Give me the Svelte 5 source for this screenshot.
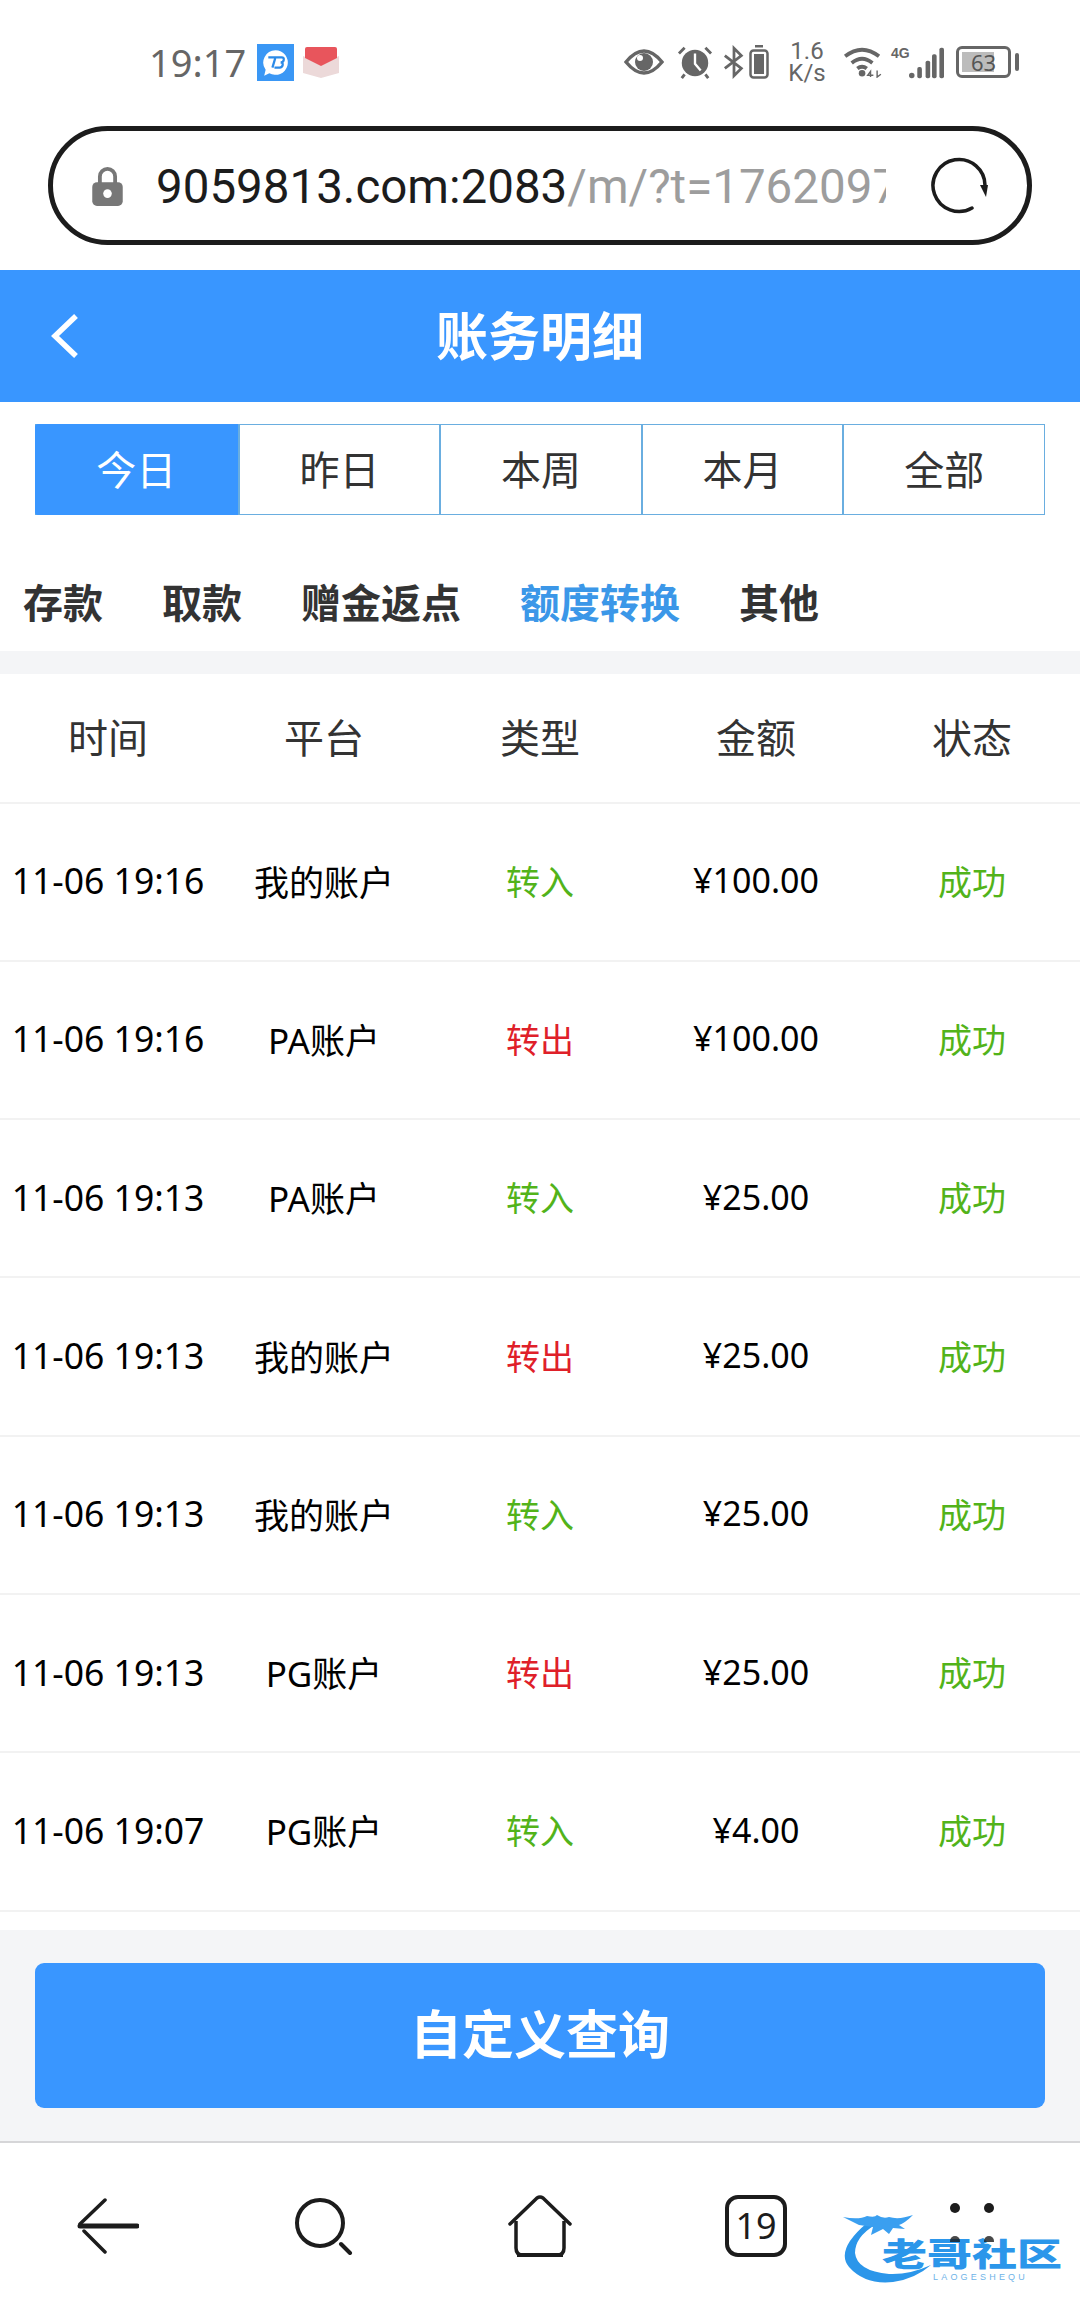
<script>
  const periods = ["今日", "昨日", "本周", "本月", "全部"];
  const kinds = [
    { label: "存款" },
    { label: "取款" },
    { label: "赠金返点" },
    { label: "额度转换", active: true },
    { label: "其他" }
  ];
  const columns = ["时间", "平台", "类型", "金额", "状态"];
  const rows = [
    { time: "11-06 19:16", platform: "我的账户", type: "转入", amount: "¥100.00" },
    { time: "11-06 19:16", platform: "PA账户", type: "转出", amount: "¥100.00" },
    { time: "11-06 19:13", platform: "PA账户", type: "转入", amount: "¥25.00" },
    { time: "11-06 19:13", platform: "我的账户", type: "转出", amount: "¥25.00" },
    { time: "11-06 19:13", platform: "我的账户", type: "转入", amount: "¥25.00" },
    { time: "11-06 19:13", platform: "PG账户", type: "转出", amount: "¥25.00" },
    { time: "11-06 19:07", platform: "PG账户", type: "转入", amount: "¥4.00" }
  ];
</script>

<div class="page">
  <div class="status">
    <div class="status-left">
      <span class="clock">19:17</span>
      <span class="app-badge">
        <svg width="37" height="37" viewBox="0 0 36 36">
          <rect width="36" height="36" fill="#3a97f5" />
          <path d="M18 6a12 12 0 1 1-6 22.400L7 31l1.400-6A12 12 0 0 1 18 6z" fill="#fff" />
          <path d="M11 13h7l-3 10M19 13h5q2.500 0 2 2.500t-3 2.500q2.500 0 2 2.500t-3 2.500h-5" fill="none" stroke="#2b8ae8" stroke-width="2.200" />
        </svg>
      </span>
      <svg class="box" width="36" height="31" viewBox="0 0 36 31">
        <path d="M0 9l18 8 18-8v17l-18 5-18-5z" fill="#ecd9d9" />
        <path d="M2 2q0-2 2-2h28q2 0 2 2v9l-16 8-16-8z" fill="#e8555c" />
      </svg>
    </div>
    <div class="status-right">
      <svg width="40" height="28" viewBox="0 0 40 28">
        <path d="M2 14Q11 3 20 3t18 11Q29 25 20 25T2 14z" fill="none" stroke="#666" stroke-width="3.500" />
        <circle cx="20" cy="14" r="9" fill="#666" />
        <circle cx="16" cy="10" r="3" fill="#fff" />
      </svg>
      <svg class="alarm" width="36" height="34" viewBox="0 0 38 36">
        <circle cx="19" cy="19" r="14" fill="#666" />
        <path d="M19 9v11l6 7" fill="none" stroke="#fff" stroke-width="2.500" />
        <path d="M2 9l6-6M36 9l-6-6M8 31l-3 4M30 31l3 4" stroke="#666" stroke-width="3" />
      </svg>
      <svg class="bt" width="22" height="34" viewBox="0 0 24 34">
        <path d="M2 10l18 14-8 8V2l8 8L2 24" fill="none" stroke="#666" stroke-width="3" />
      </svg>
      <svg class="mini-batt" width="20" height="34" viewBox="0 0 20 34">
        <rect x="6" y="0" width="8" height="2.500" fill="#666" />
        <rect x="1.500" y="5.500" width="17" height="27" rx="3" fill="none" stroke="#666" stroke-width="2.500" />
        <rect x="5" y="9" width="10" height="20" fill="#666" />
      </svg>
      <div class="speed"><span>1.6</span><span>K/s</span></div>
      <svg class="wifi" width="40" height="32" viewBox="0 0 42 34">
        <path d="M2 11Q20-3 38 11M9 18q11-9 22 0M15 24q5-4 10 0" fill="none" stroke="#666" stroke-width="4" />
        <circle cx="20" cy="29" r="3.500" fill="#666" />
        <path d="M29 33v-6l-3 4h6M36 26v7l4-3" fill="none" stroke="#666" stroke-width="1.500" />
      </svg>
      <span class="net">4G</span>
      <svg class="signal" width="35" height="33" viewBox="0 0 38 34">
        <circle cx="3" cy="31" r="3" fill="#666" />
        <rect x="9" y="22" width="5" height="12" rx="2" fill="#666" />
        <rect x="18" y="15" width="5" height="19" rx="2" fill="#666" />
        <rect x="25" y="8" width="5" height="26" rx="2" fill="#666" />
        <rect x="33" y="1" width="5" height="33" rx="2" fill="#666" />
      </svg>
      <div class="battery">
        <div class="cell"><span class="level"></span><span class="pct">63</span></div>
        <span class="nub"></span>
      </div>
    </div>
  </div>

  <div class="url-wrap">
    <div class="url">
      <svg class="lock" width="31" height="40" viewBox="0 0 32 42">
        <path d="M8 20v-9a8 8 0 0 1 16 0v9" fill="none" stroke="#777" stroke-width="4" />
        <rect x="0" y="17" width="32" height="25" rx="5" fill="#777" />
        <circle cx="16" cy="29" r="4.500" fill="#fff" />
      </svg>
      <div class="url-text"><b>9059813.com:2083</b><span>/m/?t=176209756</span></div>
      <svg class="reload" width="60" height="60" viewBox="0 0 60 60">
        <path d="M43 52A26 26 0 1 1 56 30v3" fill="none" stroke="#1c1c1c" stroke-width="3.500" stroke-linecap="round" />
        <path d="M51 29h8l-2 12z" fill="#1c1c1c" />
      </svg>
    </div>
  </div>

  <header class="topbar">
    <svg class="chevron" width="30" height="46" viewBox="0 0 30 46">
      <path d="M26 3L5 23l21 20" fill="none" stroke="#fff" stroke-width="5.500" />
    </svg>
    <h1>账务明细</h1>
  </header>

  <div class="periods">
    {#each periods as p, i}
      <div class="period" class:on={i === 0}>{p}</div>
    {/each}
  </div>

  <nav class="kinds">
    {#each kinds as k}
      <span class:active={k.active}>{k.label}</span>
    {/each}
  </nav>

  <div class="strip"></div>

  <div class="thead">
    {#each columns as c}
      <div>{c}</div>
    {/each}
  </div>

  {#each rows as r}
    <div class="row">
      <div class="time">{r.time}</div>
      <div class="platform">{r.platform}</div>
      <div class={r.type === "转入" ? "in" : "out"}>{r.type}</div>
      <div class="amount">{r.amount}</div>
      <div class="in">成功</div>
    </div>
  {/each}

  <div class="footer">
    <button type="button">自定义查询</button>
  </div>

  <div class="dock">
    <div class="dock-item">
      <svg width="62" height="56" viewBox="0 0 62 56">
        <path d="M28 2L3 26M7 33l21 21" fill="none" stroke="#1c1c1c" stroke-width="3.500" stroke-linecap="round" />
        <path d="M3 28h57" stroke="#1c1c1c" stroke-width="5" stroke-linecap="round" />
      </svg>
    </div>
    <div class="dock-item">
      <svg width="60" height="58" viewBox="0 0 60 58">
        <circle cx="26" cy="26" r="23" fill="none" stroke="#1c1c1c" stroke-width="4" />
        <path d="M47 47l9 9" stroke="#1c1c1c" stroke-width="4" stroke-linecap="round" />
      </svg>
    </div>
    <div class="dock-item">
      <svg width="66" height="62" viewBox="0 0 66 62">
        <path d="M3 29L30 3q3-2 6 0l27 26" fill="none" stroke="#1c1c1c" stroke-width="3.500" stroke-linecap="round" stroke-linejoin="round" />
        <path d="M9 26v27q0 7 7 7h34q7 0 7-7V26" fill="none" stroke="#1c1c1c" stroke-width="3.500" />
        <path d="M10 60h46" stroke="#1c1c1c" stroke-width="4" />
      </svg>
    </div>
    <div class="dock-item"><span class="tabs-count">19</span></div>
    <div class="dock-item"></div>
  </div>

  <div class="watermark">
    <i class="dot" style="left:107px;top:-12px"></i>
    <i class="dot" style="left:141px;top:-12px"></i>
    <svg class="dragon" width="100" height="70" viewBox="0 0 100 70">
      <path d="M24 8Q-8 35 6 52q16 18 44 15 22-3 38-17-22 10-42 9Q14 56 12 38q0-16 20-28z" fill="#2b96ea" />
      <path d="M0 2q16 3 24-1 8 2 10-1 6 4 12 2 10 3 24-2-8 8-14 10l6 4-12-1-4 6-6-5-12 6 2-8-14-2z" fill="#3a9ff0" />
    </svg>
    <div class="wm-name">老哥社区</div>
    <div class="wm-sub">LAOGESHEQU</div>
    <i class="dot over" style="left:107px;top:21px"></i>
    <i class="dot over" style="left:141px;top:21px"></i>
  </div>
</div>

<style>
  :global(body) {
    margin: 0;
    background: #fff;
  }
  .page {
    position: relative;
    width: 1080px;
    height: 2310px;
    overflow: hidden;
    background: #fff;
    color: #000;
    font-family: "Noto Sans CJK SC", sans-serif;
  }

  .status {
    height: 126px;
    box-sizing: border-box;
    padding: 43px 61px 0 149px;
    display: flex;
    justify-content: space-between;
    align-items: flex-start;
  }
  .status-left {
    display: flex;
    align-items: center;
    height: 38px;
  }
  .clock {
    width: 108px;
    color: #666;
    font: 400 38px/38px "Noto Sans", sans-serif;
  }
  .app-badge {
    display: flex;
    width: 37px;
    height: 37px;
  }
  .box {
    margin-left: 9px;
  }
  .status-right {
    display: flex;
    align-items: center;
    height: 38px;
  }
  .alarm { margin-left: 13px; }
  .bt { margin-left: 10px; }
  .mini-batt { margin-left: 4px; }
  .speed {
    display: flex;
    flex-direction: column;
    align-items: center;
    width: 36px;
    margin-left: 20px;
    color: #666;
    font: 400 24px/22px Roboto, sans-serif;
  }
  .wifi { margin-left: 18px; }
  .net {
    width: 18px;
    margin-left: 8px;
    margin-top: -18px;
    color: #666;
    font: 700 14px/16px "Liberation Sans Narrow", "Liberation Sans", sans-serif;
  }
  .battery {
    display: flex;
    align-items: center;
    margin-left: 12px;
  }
  .cell {
    position: relative;
    box-sizing: border-box;
    width: 55px;
    height: 32px;
    border: 3px solid #666;
    border-radius: 6px;
  }
  .level {
    position: absolute;
    left: 3px;
    top: 3px;
    bottom: 3px;
    width: 32px;
    background: #bcbcbc;
  }
  .pct {
    position: absolute;
    inset: 0;
    text-align: center;
    color: #555;
    font: 400 22px/26px "Noto Sans", sans-serif;
  }
  .nub {
    width: 4px;
    height: 18px;
    margin-left: 4px;
    border-radius: 2px;
    background: #666;
  }

  .url-wrap {
    padding: 0 48px;
    height: 144px;
  }
  .url {
    box-sizing: border-box;
    height: 119px;
    border: 5px solid #1c1c1c;
    border-radius: 60px;
    padding: 0 37px 0 39px;
    display: flex;
    align-items: center;
  }
  .lock {
    flex: none;
  }
  .url-text {
    width: 730px;
    margin-left: 33px;
    padding-top: 3px;
    overflow: hidden;
    white-space: nowrap;
    font: 400 47.500px/60px Roboto, sans-serif;
  }
  .url-text b {
    font-weight: 400;
    color: #1c1c1c;
  }
  .url-text span {
    color: #9d9d9d;
  }
  .reload {
    flex: none;
    margin-left: 43px;
  }

  .topbar {
    position: relative;
    height: 132px;
    background: #3996ff;
    display: flex;
    align-items: center;
    justify-content: center;
  }
  .chevron {
    position: absolute;
    left: 50px;
    top: 43px;
  }
  h1 {
    margin: 0 0 5px;
    color: #fff;
    font-size: 52px;
    font-weight: 700;
    line-height: 60px;
  }

  .periods {
    display: grid;
    grid-template-columns: repeat(5, 1fr);
    box-sizing: border-box;
    width: 1010px;
    height: 91px;
    margin: 22px 35px 0;
    border: 1px solid #6aaee0;
  }
  .period {
    display: flex;
    align-items: center;
    justify-content: center;
    padding-bottom: 4px;
    color: #333;
    font-size: 40px;
    border-left: 2px solid #6aaee0;
  }
  .period:first-child {
    border-left: 0;
  }
  .period.on {
    background: #3996ff;
    color: #fff;
    margin: -1px 0 -1px -1px;
    border-radius: 3px 0 0 3px;
  }

  .kinds {
    height: 136px;
    box-sizing: border-box;
    padding: 36px 23px 0;
    display: flex;
    align-items: center;
    gap: 59px;
    font-size: 40px;
    font-weight: 700;
    color: #333;
  }
  .kinds .active {
    color: #3b97e8;
  }
  .strip {
    height: 23px;
    background: #f4f5f7;
  }

  .thead,
  .row {
    display: grid;
    grid-template-columns: repeat(5, 216px);
    text-align: center;
    align-items: center;
    border-bottom: 2px solid #f2f2f2;
    box-sizing: border-box;
  }
  .thead {
    height: 129.500px;
    padding-bottom: 4px;
    color: #333;
    font-size: 40px;
  }
  .row {
    height: 158.300px;
    padding-bottom: 3px;
  }
  .row .in,
  .row .out {
    font-size: 34px;
  }
  .row .in {
    color: #52b31a;
  }
  .row .out {
    color: #df2029;
  }
  .time {
    white-space: nowrap;
    font: 400 35.500px/50px "Noto Sans", sans-serif;
  }
  .platform {
    font-family: "Noto Sans", "Noto Sans CJK SC", sans-serif;
    font-size: 35px;
  }
  .amount {
    font: 400 34px/50px "Noto Sans", sans-serif;
  }

  .footer {
    margin-top: 18px;
    height: 213px;
    box-sizing: border-box;
    padding: 33px 35px 0;
    background: #f4f5f7;
    border-bottom: 2px solid #d6d6d8;
  }
  button {
    display: block;
    width: 100%;
    height: 145px;
    border: 0;
    border-radius: 9px;
    padding: 0 0 7px;
    background: #3996ff;
    color: #fff;
    font-family: inherit;
    font-size: 52px;
    font-weight: 700;
  }

  .dock {
    display: grid;
    grid-template-columns: repeat(5, 216px);
    padding-top: 52px;
  }
  .dock-item {
    display: flex;
    justify-content: center;
    align-items: center;
    height: 62px;
  }
  .tabs-count {
    box-sizing: border-box;
    width: 62px;
    height: 62px;
    border: 4px solid #1c1c1c;
    border-radius: 13px;
    text-align: center;
    color: #1c1c1c;
    font: 400 36px/54px "Noto Sans", sans-serif;
  }

  .watermark {
    position: absolute;
    left: 843px;
    top: 2215px;
    width: 225px;
    height: 72px;
  }
  .dot {
    position: absolute;
    width: 10px;
    height: 10px;
    border-radius: 50%;
    background: #1c1c1c;
  }
  .dot.over {
    opacity: 0.8;
    clip-path: inset(0 0 40% 0);
  }
  .dragon {
    position: absolute;
    left: 0;
    top: 0;
  }
  .wm-name {
    position: absolute;
    left: 39px;
    top: 17px;
    transform: scaleY(0.72);
    color: #2b96ea;
    font-size: 45px;
    font-weight: 900;
    line-height: 40px;
    white-space: nowrap;
  }
  .wm-sub {
    position: absolute;
    left: 90px;
    top: 57px;
    color: #6fb4e8;
    font: 400 9px/10px "Liberation Sans", sans-serif;
    letter-spacing: 3.200px;
    white-space: nowrap;
  }
</style>
